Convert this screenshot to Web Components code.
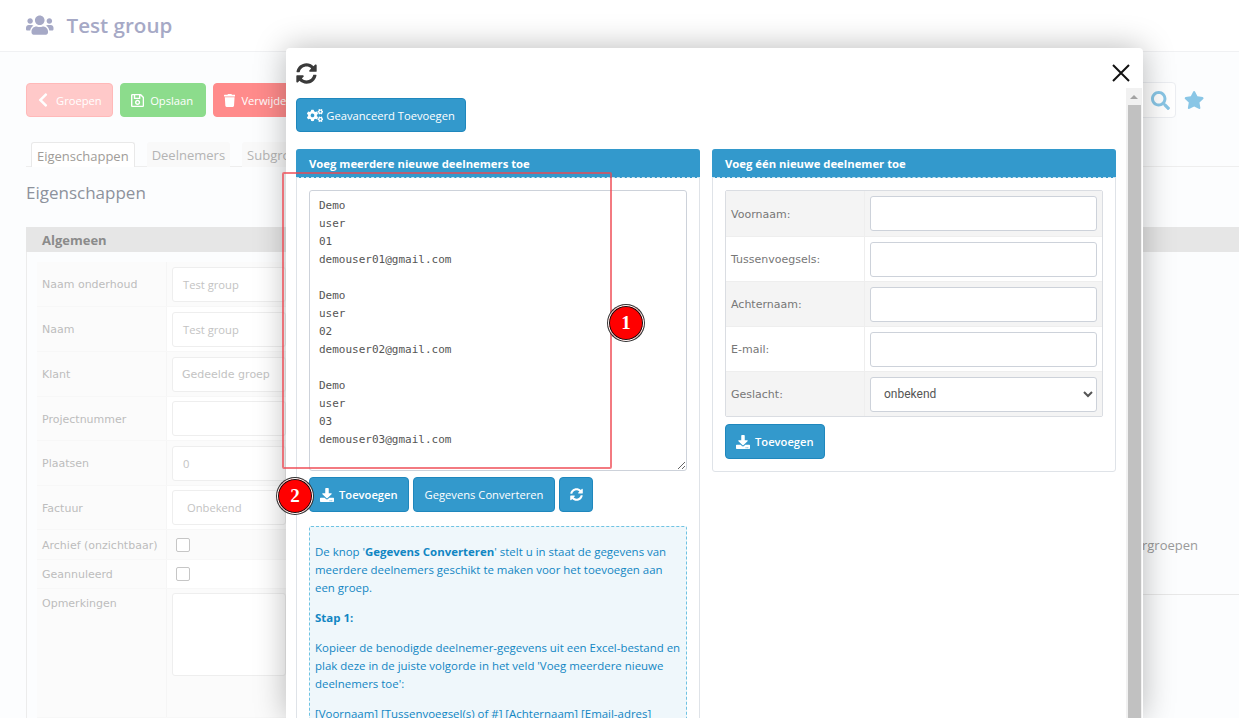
<!DOCTYPE html>
<html lang="nl">
<head>
<meta charset="utf-8">
<title>Test group</title>
<style>
  html, body { margin: 0; height: 100%; overflow: hidden; background: #fcfdfe; }
  body { font-family: "Open Sans", "Liberation Sans", sans-serif; font-size: 12px; }
</style>
</head>
<body>
<group-page></group-page>

<script>
const ICONS = {
  users: ["0 0 640 512", "M96 224c35.3 0 64-28.7 64-64s-28.7-64-64-64-64 28.7-64 64 28.7 64 64 64zm448 0c35.3 0 64-28.7 64-64s-28.7-64-64-64-64 28.7-64 64 28.7 64 64 64zm32 32h-64c-17.6 0-33.5 7.1-45.1 18.6 40.3 22.1 68.9 62 75.1 109.4h66c17.7 0 32-14.3 32-32v-32c0-35.3-28.7-64-64-64zm-256 0c61.9 0 112-50.1 112-112S381.9 32 320 32 208 82.1 208 144s50.1 112 112 112zm76.8 32h-8.3c-20.8 10-43.9 16-68.5 16s-47.6-6-68.5-16h-8.3C179.6 288 128 339.6 128 403.2V432c0 26.5 21.5 48 48 48h288c26.5 0 48-21.5 48-48v-28.8c0-63.6-51.6-115.2-115.2-115.2zm-223.7-13.4C161.5 263.1 145.6 256 128 256H64c-35.3 0-64 28.7-64 64v32c0 17.7 14.3 32 32 32h65.9c6.3-47.4 34.9-87.3 75.2-109.4z"],
  sync: ["0 0 512 512", "M370.72 133.28C339.458 104.008 298.888 87.962 255.848 88c-77.458.068-144.328 53.178-162.791 126.85-1.344 5.363-6.122 9.15-11.651 9.15H24.103c-7.498 0-13.194-6.807-11.807-14.176C33.933 94.924 134.813 8 256 8c66.448 0 126.791 26.136 171.315 68.685L463.03 40.97C478.149 25.851 504 36.559 504 57.941V192c0 13.255-10.745 24-24 24H345.941c-21.382 0-32.09-25.851-16.971-40.971l41.75-41.749zM32 296h134.059c21.382 0 32.09 25.851 16.971 40.971l-41.75 41.75c31.262 29.273 71.835 45.319 114.876 45.28 77.418-.07 144.315-53.144 162.787-126.849 1.344-5.363 6.122-9.15 11.651-9.15h57.304c7.498 0 13.194 6.807 11.807 14.176C478.067 417.076 377.187 504 256 504c-66.448 0-126.791-26.136-171.315-68.685L48.97 471.03C33.851 486.149 8 475.441 8 454.059V320c0-13.255 10.745-24 24-24z"],
  download: ["0 0 512 512", "M216 0h80c13.3 0 24 10.7 24 24v168h87.7c17.8 0 26.7 21.5 14.1 34.1L269.7 378.3c-7.5 7.5-19.8 7.5-27.3 0L90.1 226.1c-12.6-12.6-3.7-34.1 14.1-34.1H192V24c0-13.3 10.7-24 24-24zm296 376v112c0 13.3-10.7 24-24 24H24c-13.3 0-24-10.7-24-24V376c0-13.3 10.7-24 24-24h146.7l49 49c20.1 20.1 52.5 20.1 72.6 0l49-49H488c13.3 0 24 10.7 24 24zm-124 88c0-11-9-20-20-20s-20 9-20 20 9 20 20 20 20-9 20-20zm64 0c0-11-9-20-20-20s-20 9-20 20 9 20 20 20 20-9 20-20z"],
  search: ["0 0 512 512", "M505 442.7L405.3 343c-4.5-4.5-10.6-7-17-7H372c27.6-35.3 44-79.7 44-128C416 93.1 322.9 0 208 0S0 93.1 0 208s93.1 208 208 208c48.3 0 92.7-16.4 128-44v16.3c0 6.4 2.5 12.5 7 17l99.7 99.7c9.4 9.4 24.6 9.4 33.9 0l28.3-28.3c9.4-9.4 9.4-24.6.1-34zM208 336c-70.7 0-128-57.2-128-128 0-70.7 57.2-128 128-128 70.7 0 128 57.2 128 128 0 70.7-57.2 128-128 128z"],
  star: ["0 0 576 512", "M259.3 17.8L194 150.2 47.9 171.5c-26.2 3.8-36.7 36.1-17.7 54.6l105.7 103-25 145.5c-4.5 26.3 23.2 46 46.4 33.7L288 439.6l130.7 68.7c23.2 12.2 50.9-7.4 46.4-33.7l-25-145.5 105.7-103c19-18.5 8.5-50.8-17.7-54.6L382 150.2 316.7 17.8c-11.7-23.6-45.6-23.9-57.4 0z"],
  trash: ["0 0 448 512", "M432 32H312l-9.4-18.7A24 24 0 0 0 281.1 0H166.8a23.72 23.72 0 0 0-21.4 13.3L136 32H16A16 16 0 0 0 0 48v32a16 16 0 0 0 16 16h416a16 16 0 0 0 16-16V48a16 16 0 0 0-16-16zM53.2 467a48 48 0 0 0 47.9 45h245.8a48 48 0 0 0 47.9-45L416 128H32z"],
  chevron: ["0 0 320 512", "M34.52 239.03L228.87 44.69c9.37-9.37 24.57-9.37 33.94 0l22.67 22.67c9.36 9.36 9.37 24.52.04 33.9L131.49 256l154.02 154.75c9.34 9.38 9.32 24.54-.04 33.9l-22.67 22.67c-9.37 9.37-24.57 9.37-33.94 0L34.52 272.97c-9.37-9.37-9.37-24.57 0-33.94z"],
  save: ["0 0 448 512", "M433.941 129.941l-83.882-83.882A48 48 0 0 0 316.118 32H48C21.49 32 0 53.49 0 80v352c0 26.51 21.49 48 48 48h352c26.51 0 48-21.49 48-48V163.882a48 48 0 0 0-14.059-33.941zM272 80v80H144V80h128zm122 352H54a6 6 0 0 1-6-6V86a6 6 0 0 1 6-6h42v104c0 13.255 10.745 24 24 24h176c13.255 0 24-10.745 24-24V83.882l78.243 78.243a6 6 0 0 1 1.757 4.243V426a6 6 0 0 1-6 6zM224 232c-48.523 0-88 39.477-88 88s39.477 88 88 88 88-39.477 88-88-39.477-88-88-88zm0 128c-22.056 0-40-17.944-40-40s17.944-40 40-40 40 17.944 40 40-17.944 40-40 40z"],
  cogs: ["0 0 640 512", "M512.1 191l-8.2 14.3c-3 5.3-9.4 7.5-15.1 5.4-11.8-4.4-22.6-10.7-32.1-18.6-4.6-3.8-5.8-10.5-2.8-15.7l8.2-14.3c-6.9-8-12.3-17.3-15.9-27.4h-16.5c-6 0-11.2-4.3-12.2-10.3-2-12-2.1-24.6 0-37.1 1-6 6.2-10.4 12.2-10.4h16.5c3.6-10.1 9-19.4 15.9-27.4l-8.2-14.3c-3-5.2-1.9-11.9 2.8-15.7 9.5-7.9 20.4-14.2 32.1-18.6 5.7-2.1 12.1.1 15.1 5.4l8.2 14.3c10.5-1.9 21.2-1.9 31.7 0L552 6.3c3-5.3 9.4-7.5 15.1-5.4 11.8 4.4 22.6 10.7 32.1 18.6 4.6 3.8 5.8 10.5 2.8 15.7l-8.2 14.3c6.9 8 12.3 17.3 15.9 27.4h16.5c6 0 11.2 4.3 12.2 10.3 2 12 2.1 24.6 0 37.1-1 6-6.2 10.4-12.2 10.4h-16.5c-3.6 10.1-9 19.4-15.9 27.4l8.2 14.3c3 5.2 1.9 11.9-2.8 15.7-9.5 7.9-20.4 14.2-32.1 18.6-5.7 2.1-12.1-.1-15.1-5.4l-8.2-14.3c-10.4 1.9-21.2 1.9-31.7 0zm-10.5-58.8c38.5 29.6 82.4-14.3 52.8-52.8-38.5-29.7-82.4 14.3-52.8 52.8zM386.3 286.1l33.7 16.8c10.1 5.8 14.5 18.1 10.5 29.1-8.9 24.2-26.4 46.4-42.6 65.8-7.4 8.9-20.2 11.1-30.3 5.3l-29.1-16.8c-16 13.7-34.6 24.6-54.9 31.7v33.6c0 11.6-8.3 21.6-19.7 23.6-24.6 4.2-50.4 4.4-75.9 0-11.5-2-20-11.9-20-23.6V418c-20.3-7.2-38.9-18-54.9-31.7L74 403c-10 5.8-22.9 3.6-30.3-5.3-16.2-19.4-33.3-41.6-42.2-65.7-4-10.9.4-23.2 10.5-29.1l33.3-16.8c-3.9-20.9-3.9-42.4 0-63.4L12 205.8c-10.1-5.8-14.6-18.1-10.5-29 8.9-24.2 26-46.4 42.2-65.8 7.4-8.9 20.2-11.1 30.3-5.3l29.1 16.8c16-13.7 34.6-24.6 54.9-31.7V57.1c0-11.5 8.2-21.5 19.6-23.5 24.6-4.2 50.5-4.4 76-.1 11.5 2 20 11.9 20 23.6v33.6c20.3 7.2 38.9 18 54.9 31.7l29.1-16.8c10-5.8 22.9-3.6 30.3 5.3 16.2 19.4 33.2 41.6 42.1 65.8 4 10.9.1 23.2-10 29.1l-33.7 16.8c3.9 21 3.9 42.5 0 63.5zm-117.6 21.1c59.2-77-28.7-164.9-105.7-105.7-59.2 77 28.7 164.9 105.7 105.7zm243.4 182.7l-8.2 14.3c-3 5.3-9.4 7.5-15.1 5.4-11.8-4.4-22.6-10.7-32.1-18.6-4.6-3.8-5.8-10.5-2.8-15.7l8.2-14.3c-6.9-8-12.3-17.3-15.9-27.4h-16.5c-6 0-11.2-4.3-12.2-10.3-2-12-2.1-24.6 0-37.1 1-6 6.2-10.4 12.2-10.4h16.5c3.6-10.1 9-19.4 15.9-27.4l-8.2-14.3c-3-5.2-1.9-11.9 2.8-15.7 9.5-7.9 20.4-14.2 32.1-18.6 5.7-2.1 12.1.1 15.1 5.4l8.2 14.3c10.5-1.9 21.2-1.9 31.7 0l8.2-14.3c3-5.3 9.4-7.5 15.1-5.4 11.8 4.4 22.6 10.7 32.1 18.6 4.6 3.8 5.8 10.5 2.8 15.7l-8.2 14.3c6.9 8 12.3 17.3 15.9 27.4h16.5c6 0 11.2 4.3 12.2 10.3 2 12 2.1 24.6 0 37.1-1 6-6.2 10.4-12.2 10.4h-16.5c-3.6 10.1-9 19.4-15.9 27.4l8.2 14.3c3 5.2 1.9 11.9-2.8 15.7-9.5 7.9-20.4 14.2-32.1 18.6-5.7 2.1-12.1-.1-15.1-5.4l-8.2-14.3c-10.4 1.9-21.2 1.9-31.7 0zM501.6 431c38.5 29.6 82.4-14.3 52.8-52.8-38.5-29.6-82.4 14.3-52.8 52.8z"]
};

class UiIcon extends HTMLElement {
  connectedCallback() {
    const icon = ICONS[this.getAttribute("name")];
    const size = this.getAttribute("size") || 12;
    this.attachShadow({ mode: "open" });
    this.shadowRoot.innerHTML = `
      <style>
        :host { display: inline-flex; align-items: center; justify-content: center; }
        svg { height: ${size}px; display: block; fill: currentColor; }
      </style>
      <svg viewBox="${icon[0]}"><path d="${icon[1]}"/></svg>`;
  }
}

const ui_button_template = document.createElement("template");
ui_button_template.innerHTML = `
<style>
  :host {
    display: inline-flex; align-items: center; gap: 5px;
    box-sizing: border-box; height: 35px; padding: 0 10px;
    border: 1px solid var(--line, #1f87bd); border-radius: 4px;
    background: var(--fill, #3399cc); color: #fff;
    font: 500 11.2px "Open Sans", sans-serif; white-space: nowrap;
  }
</style>
<slot></slot>`;

class UiButton extends HTMLElement {
  connectedCallback() {
    this.attachShadow({ mode: "open" });
    this.shadowRoot.appendChild(ui_button_template.content.cloneNode(true));
  }
}

const ui_panel_template = document.createElement("template");
ui_panel_template.innerHTML = `
<style>
  :host {
    display: block; box-sizing: border-box; border: 1px solid #dfe3e8;
    border-radius: 3px; background: #fff;
  }
  .head {
    margin: -1px -1px 0; height: 29px; box-sizing: border-box; padding: 0 13px;
    background: #3399cc; border-bottom: 1px dashed #cfe5f1; border-radius: 3px 3px 0 0;
    color: #fff; font: 700 11.3px/29px "Open Sans", sans-serif;
  }
  .body { padding: 12px; }
</style>
<div class="head"></div>
<div class="body"><slot></slot></div>`;

class UiPanel extends HTMLElement {
  connectedCallback() {
    this.attachShadow({ mode: "open" });
    this.shadowRoot.appendChild(ui_panel_template.content.cloneNode(true));
    this.shadowRoot.querySelector(".head").textContent = this.getAttribute("heading");
  }
}

// one row of the visible "Voeg een nieuwe deelnemer toe" form
class EntryRow extends HTMLElement {
  connectedCallback() {
    const odd = this.hasAttribute("odd");
    this.attachShadow({ mode: "open" });
    this.shadowRoot.innerHTML = `
      <style>
        :host { display: grid; grid-template-columns: 139px 1fr; height: 45px; border-top: 1px solid #eee; box-sizing: border-box; }
        :host(:first-child) { border-top: 0; height: 45px; }
        .label {
          display: flex; align-items: center; padding: 1px 0 0 5px;
          border-right: 1px solid #eee; background: ${odd ? "#f4f4f4" : "#fff"};
          color: #777; font: 11px "DejaVu Sans", sans-serif;
        }
        .field { display: flex; align-items: center; padding: 0 5px 0 5px; background: ${odd ? "#f4f4f4" : "#fff"}; }
        input, select {
          box-sizing: border-box; width: 100%; height: 35px; border: 1px solid #cdd2da;
          border-radius: 3px; background: #fff; color: #555; font: 12px "Roboto", sans-serif;
        }
        select { padding-left: 9px; }
      </style>
      <div class="label">${this.getAttribute("label")}</div>
      <div class="field">${this.hasAttribute("select")
        ? `<select><option>onbekend</option></select>`
        : `<input type="text">`}</div>`;
  }
}

// a row of the faded form behind the dialog
class BackRow extends HTMLElement {
  connectedCallback() {
    const value = this.getAttribute("value");
    const kind = this.getAttribute("kind") || "input";
    const height = this.getAttribute("height") || 44;
    let field = `<div class="input ${this.getAttribute("look") || ""}">${value || ""}</div>`;
    if (kind == "check") field = `<div class="check"></div>`;
    if (kind == "area") field = `<div class="input area"></div>`;
    this.attachShadow({ mode: "open" });
    this.shadowRoot.innerHTML = `
      <style>
        :host {
          display: grid; grid-template-columns: 130px 1fr; height: ${height}px;
          box-sizing: border-box; border-bottom: 1px solid #f7f7f7;
          font: 11px "DejaVu Sans", sans-serif; color: #bdbdbd;
          background: ${this.hasAttribute("odd") ? "#fbfbfb" : "#fff"};
        }
        .label { border-right: 1px solid #f5f5f5; padding-left: 5px; display: flex; align-items: ${kind == "area" ? "flex-start" : "center"}; padding-top: ${kind == "area" ? "8px" : "1px"}; background: #fbfbfb; }
        .field { padding-left: 5px; display: flex; align-items: ${kind == "area" ? "flex-start" : "center"}; padding-top: ${kind == "area" ? "4px" : "0"}; }
        .input {
          box-sizing: border-box; width: 100%; height: 35px; line-height: 33px; padding-left: 10px;
          border: 1px solid #eeeeee; border-radius: 3px; background: #fff;
          font: 11.2px/33px "Open Sans", sans-serif; color: #c3c3c3;
        }
        .input.wide { font: 11px/33px "DejaVu Sans", sans-serif; padding-left: 9px; }
        .input.sel { padding-left: 14px; }
        .area { height: 83px; }
        .check { width: 12px; height: 12px; margin-left: 4px; border: 1px solid #c6c6c6; border-radius: 2px; background: #fff; }
      </style>
      <div class="label">${this.getAttribute("label")}</div>
      <div class="field">${field}</div>`;
  }
}

const back_form_template = document.createElement("template");
back_form_template.innerHTML = `
<style>
  :host { display: block; }
  .bar {
    height: 25px; background: #e6e6e6; color: #8b8b8b;
    font: 700 13px/26px "Open Sans", sans-serif; padding-left: 16px;
  }
  .cols { display: grid; grid-template-columns: 260px 1fr; height: 470px; }
  .rows { border-left: 1px solid #ececec; padding: 10px 0 0 10px; }
  .side { display: flex; flex-direction: column; justify-content: flex-start; }
  .side .text {
    margin-top: 284px; padding-right: 41px; height: 58px; text-align: right;
    border-bottom: 1px solid #e8e8e8; color: #9a9a9a; font: 13px "Open Sans", sans-serif;
  }
</style>
<div class="bar">Algemeen</div>
<div class="cols">
  <div class="rows">
    <back-row odd label="Naam onderhoud" value="Test group" height="45"></back-row>
    <back-row label="Naam" value="Test group" height="45"></back-row>
    <back-row odd label="Klant" value="Gedeelde groep" look="wide" height="45"></back-row>
    <back-row label="Projectnummer" height="44"></back-row>
    <back-row odd label="Plaatsen" value="0" height="45"></back-row>
    <back-row label="Factuur" value="Onbekend" look="sel" height="44"></back-row>
    <back-row odd label="Archief (onzichtbaar)" kind="check" height="30"></back-row>
    <back-row label="Geannuleerd" kind="check" height="29"></back-row>
    <back-row odd label="Opmerkingen" kind="area" height="129"></back-row>
  </div>
  <div class="side"><div class="text">Ondergroepen</div></div>
</div>`;

class BackForm extends HTMLElement {
  connectedCallback() {
    this.attachShadow({ mode: "open" });
    this.shadowRoot.appendChild(back_form_template.content.cloneNode(true));
  }
}

const note_box_template = document.createElement("template");
note_box_template.innerHTML = `
<style>
  :host {
    display: block; margin-top: 14px; padding: 16px 5px 0;
    border: 1px dashed #6fc3e3; border-radius: 2px; background: #eff7fb;
    color: #1186c3; font: 11.45px/18px "Open Sans", sans-serif;
  }
  ::slotted(p) { margin: 0 0 12px; }
</style>
<slot></slot>`;

class NoteBox extends HTMLElement {
  connectedCallback() {
    this.attachShadow({ mode: "open" });
    this.shadowRoot.appendChild(note_box_template.content.cloneNode(true));
  }
}

class CallOut extends HTMLElement {
  connectedCallback() {
    this.attachShadow({ mode: "open" });
    this.shadowRoot.innerHTML = `
      <style>
        :host {
          position: absolute; left: ${this.getAttribute("x")}px; top: ${this.getAttribute("y")}px;
          box-sizing: border-box; width: 36px; height: 36px; border-radius: 50%;
          display: flex; align-items: center; justify-content: center;
          background: #f00; border: 1px solid #fff; box-shadow: 0 0 0 1px #111 inset, 0 0 0 1px #333;
          color: #fff; font: 700 19px "Liberation Serif", serif;
        }
      </style>
      <slot></slot>`;
  }
}

const entry_dialog_template = document.createElement("template");
entry_dialog_template.innerHTML = `
<style>
  :host {
    position: absolute; left: 286px; top: 48px; width: 857px; height: 670px;
    box-sizing: border-box; background: #fff; border-radius: 4px 4px 0 0;
    box-shadow: 0 0 32px rgba(0,0,0,.28); overflow: hidden;
  }
  .top { display: flex; justify-content: space-between; align-items: flex-start; padding: 15px 13px 0 10px; color: #3a3a3a; height: 35px; }
  .close { display: block; width: 18px; height: 18px; margin-top: 1px; }
  .scroll { padding: 0 27px 0 10px; }
  .adv { height: 34px; gap: 3px; }
  .cols { display: grid; grid-template-columns: 404px 404px; column-gap: 12px; margin-top: 17px; align-items: start; }
  textarea {
    display: block; box-sizing: border-box; width: 378px; height: 281px; margin: 0;
    padding: 6px 9px 5px; border: 1px solid #cdd2da; border-radius: 3px; outline: 0;
    font: 11px/18px "DejaVu Sans Mono", monospace; color: #555; background: #fff;
  }
  .actions { display: flex; gap: 4px; margin-top: 6px; }
  .put { width: 100px; font-weight: 600; }
  .convert { width: 142px; justify-content: center; }
  .icon-only { width: 34px; padding: 0; justify-content: center; }
  .table { border: 1px solid #dadde2; border-radius: 2px; background: #f4f4f4; }
  .add { margin-top: 7px; }
  .track {
    position: absolute; right: 1px; top: 40px; bottom: 0; width: 16px; background: #f1f1f1;
  }
  .arrow {
    width: 0; height: 0; margin: 7px auto 0;
    border-left: 4px solid transparent; border-right: 4px solid transparent; border-bottom: 4px solid #a3a3a3;
  }
  .thumb { position: absolute; left: 2px; right: 1px; top: 17px; bottom: 0; background: #c1c1c1; }
</style>
<div class="top">
  <ui-icon name="sync" size="21"></ui-icon>
  <svg class="close" viewBox="0 0 18 18"><path d="M1 1l16 16M17 1L1 17" stroke="#111" stroke-width="2" fill="none"/></svg>
</div>
<div class="scroll">
  <ui-button class="adv"><ui-icon name="cogs" size="13"></ui-icon>Geavanceerd Toevoegen</ui-button>
  <div class="cols">
    <ui-panel heading="Voeg meerdere nieuwe deelnemers toe">
      <textarea spellcheck="false">Demo
user
01
demouser01@gmail.com

Demo
user
02
demouser02@gmail.com

Demo
user
03
demouser03@gmail.com</textarea>
      <div class="actions">
        <ui-button class="put"><ui-icon name="download" size="14"></ui-icon>Toevoegen</ui-button>
        <ui-button class="convert">Gegevens Converteren</ui-button>
        <ui-button class="icon-only"><ui-icon name="sync" size="13"></ui-icon></ui-button>
      </div>
      <note-box>
        <p>De knop '<b>Gegevens Converteren</b>' stelt u in staat de gegevens van meerdere deelnemers geschikt te maken voor het toevoegen aan een groep.</p>
        <p><b>Stap 1:</b></p>
        <p>Kopieer de benodigde deelnemer-gegevens uit een Excel-bestand en plak deze in de juiste volgorde in het veld 'Voeg meerdere nieuwe deelnemers toe':</p>
        <p>[Voornaam] [Tussenvoegsel(s) of #] [Achternaam] [Email-adres]</p>
      </note-box>
    </ui-panel>
    <ui-panel heading="Voeg één nieuwe deelnemer toe">
      <div class="table">
        <entry-row odd label="Voornaam:"></entry-row>
        <entry-row label="Tussenvoegsels:"></entry-row>
        <entry-row odd label="Achternaam:"></entry-row>
        <entry-row label="E-mail:"></entry-row>
        <entry-row odd select label="Geslacht:"></entry-row>
      </div>
      <ui-button class="add put"><ui-icon name="download" size="14"></ui-icon>Toevoegen</ui-button>
    </ui-panel>
  </div>
</div>
<div class="track"><div class="arrow"></div><div class="thumb"></div></div>`;

class EntryDialog extends HTMLElement {
  connectedCallback() {
    this.attachShadow({ mode: "open" });
    this.shadowRoot.appendChild(entry_dialog_template.content.cloneNode(true));
  }
}

const group_page_template = document.createElement("template");
group_page_template.innerHTML = `
<style>
  :host { display: block; position: relative; height: 718px; overflow: hidden; background: #fcfdfe; font-family: "Open Sans", sans-serif; }
  header {
    display: flex; align-items: center; gap: 13px; height: 49px; padding: 0 0 2px 26px;
    background: #fff; border-bottom: 1px solid #f0f1f3; color: #a6a9c6;
    font: 600 20.6px "Open Sans", sans-serif;
  }
  .main { padding: 30px 0 0 26px; }
  .tools { display: flex; align-items: center; gap: 7px; height: 36px; padding-right: 35px; }
  .tools ui-button { height: 34px; font-size: 11.2px; }
  .back { --fill: #ffc9c9; --line: #ffb9b9; width: 87px; gap: 8px; padding-left: 11px; }
  .save { --fill: #8cdc8c; --line: #8cdc8c; width: 86px; gap: 6px; }
  .del  { --fill: #ff8b8b; --line: #ff8b8b; width: 100px; gap: 6px; }
  .search {
    margin-left: auto; display: flex; align-items: center; justify-content: flex-end;
    width: 60px; height: 36px; box-sizing: border-box; padding-right: 5px;
    border: 1px solid #eceef2; border-radius: 4px; background: #fff; color: #89c6e6;
  }
  .star { color: #89c6e6; margin-left: 1px; }
  .tabs { display: flex; gap: 12px; margin-top: 24px; padding-left: 5px; height: 25px; box-sizing: border-box; border-bottom: 1px solid #eeeeee; }
  .tab {
    box-sizing: border-box; height: 25px; padding: 0 5px; line-height: 27px; font-size: 13px;
    color: #b4b4b4; background: #f9f9f9; border-radius: 3px 3px 0 0;
  }
  .tab.on { height: 25px; background: #fff; color: #a09c98; border: 1px solid #e9e9e9; border-bottom: 0; line-height: 26px; }
  h2 { margin: 14px 0 0; font: 400 17px/24px "Open Sans", sans-serif; color: #8d929c; }
  back-form { margin-top: 22px; }
  .mark {
    position: absolute; left: 282px; top: 172px; width: 330px; height: 297px; box-sizing: border-box;
    border: 2px solid rgba(238,70,80,.72); border-radius: 2px;
  }
</style>
<header><ui-icon name="users" size="22"></ui-icon>Test group</header>
<div class="main">
  <div class="tools">
    <ui-button class="back"><ui-icon name="chevron" size="16"></ui-icon>Groepen</ui-button>
    <ui-button class="save"><ui-icon name="save" size="15"></ui-icon>Opslaan</ui-button>
    <ui-button class="del"><ui-icon name="trash" size="13"></ui-icon>Verwijderen</ui-button>
    <div class="search"><ui-icon name="search" size="19"></ui-icon></div>
    <ui-icon class="star" name="star" size="18"></ui-icon>
  </div>
  <div class="tabs">
    <div class="tab on">Eigenschappen</div>
    <div class="tab">Deelnemers</div>
    <div class="tab">Subgroepen</div>
  </div>
  <h2>Eigenschappen</h2>
  <back-form></back-form>
</div>
<entry-dialog></entry-dialog>
<div class="mark"></div>
<call-out x="608" y="305">1</call-out>
<call-out x="277" y="478">2</call-out>`;

class GroupPage extends HTMLElement {
  connectedCallback() {
    this.attachShadow({ mode: "open" });
    this.shadowRoot.appendChild(group_page_template.content.cloneNode(true));
  }
}

window.customElements.define("ui-icon", UiIcon);
window.customElements.define("ui-button", UiButton);
window.customElements.define("ui-panel", UiPanel);
window.customElements.define("entry-row", EntryRow);
window.customElements.define("back-row", BackRow);
window.customElements.define("back-form", BackForm);
window.customElements.define("note-box", NoteBox);
window.customElements.define("call-out", CallOut);
window.customElements.define("entry-dialog", EntryDialog);
window.customElements.define("group-page", GroupPage);
</script>
</body>
</html>
